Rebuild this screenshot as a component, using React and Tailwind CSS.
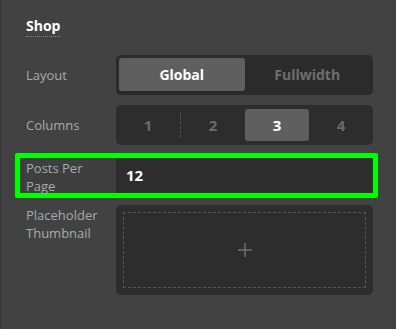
import React from "react";

const labelCls = "shrink-0 text-[13px] leading-[18px] text-[#a3abb3]";

const columns = [1, 2, 3, 4];

export default function App() {
  const active = 3;
  return (
    <div
      className="w-[396px] h-[329px] bg-[#424242] border-l border-[#363636] pl-[25px] pr-[23px] pt-[17px]"
      style={{ fontFamily: '"Open Sans", "Noto Sans", sans-serif' }}
    >
      <div className="flex">
        <h2 className="text-[14px] font-bold leading-[18px] text-white border-b border-dotted border-[#8a8a8a] pb-[1px]">
          Shop
        </h2>
      </div>

      <div className="mt-[18px] flex flex-col">
        {/* Layout */}
        <div className="flex items-center h-[40px]">
          <div className={labelCls + " w-[90px]"}>Layout</div>
          <div className="flex h-[40px] w-[257px] rounded-[5px] bg-[#2b2b2b] p-[3px] pb-[4px]">
            <button className="flex-1 rounded-[3px] bg-[#5f5f5f] text-[14px] font-bold text-white">
              Global
            </button>
            <button className="flex-1 text-[14px] font-bold text-[#6e6e6e]">
              Fullwidth
            </button>
          </div>
        </div>

        {/* Columns */}
        <div className="mt-[10px] flex items-center h-[40px]">
          <div className={labelCls + " w-[90px]"}>Columns</div>
          <div className="flex h-[40px] w-[257px] rounded-[5px] bg-[#2d2d2d] py-[4px]">
            {columns.map((n, i) => (
              <div
                key={n}
                className={
                  "flex-1 flex items-center justify-center text-[15px] font-bold " +
                  (n === active
                    ? "rounded-[3px] bg-[#5f5f5f] text-white"
                    : "text-[#6a6a6a]") +
                  (i === 0 ? " border-r border-dashed border-[#4f4f4f] my-[3px]" : "")
                }
              >
                {n}
              </div>
            ))}
          </div>
        </div>

        {/* Posts per page (highlighted) */}
        <div className="mt-[8px] -ml-[11px] -mr-[5px] flex h-[45px] border-[5px] border-[#00ff00] rounded-[2px] bg-[#3f3f3f]">
          <div className={labelCls + " w-[96px] h-[35px] pl-[6px] pr-[20px] pt-[1px]"}>Posts Per Page</div>
          <div className="flex items-center h-[35px] flex-1 bg-[#2d2d2d] pl-[10px] text-[15px] font-bold text-white">
            12
          </div>
        </div>

        {/* Placeholder thumbnail */}
        <div className="mt-[7px] flex">
          <div className={labelCls + " w-[90px] pt-[1px]"}>Placeholder Thumbnail</div>
          <div className="h-[90px] w-[257px] rounded-[5px] bg-[#2d2d2d] p-[7px]">
            <div className="flex h-full items-center justify-center border border-dashed border-[#555555]">
              <svg width="16" height="16" viewBox="0 0 16 16" fill="none">
                <path d="M8 1v14M1 8h14" stroke="#6f6f6f" strokeWidth="1.5" />
              </svg>
            </div>
          </div>
        </div>
      </div>
    </div>
  );
}
